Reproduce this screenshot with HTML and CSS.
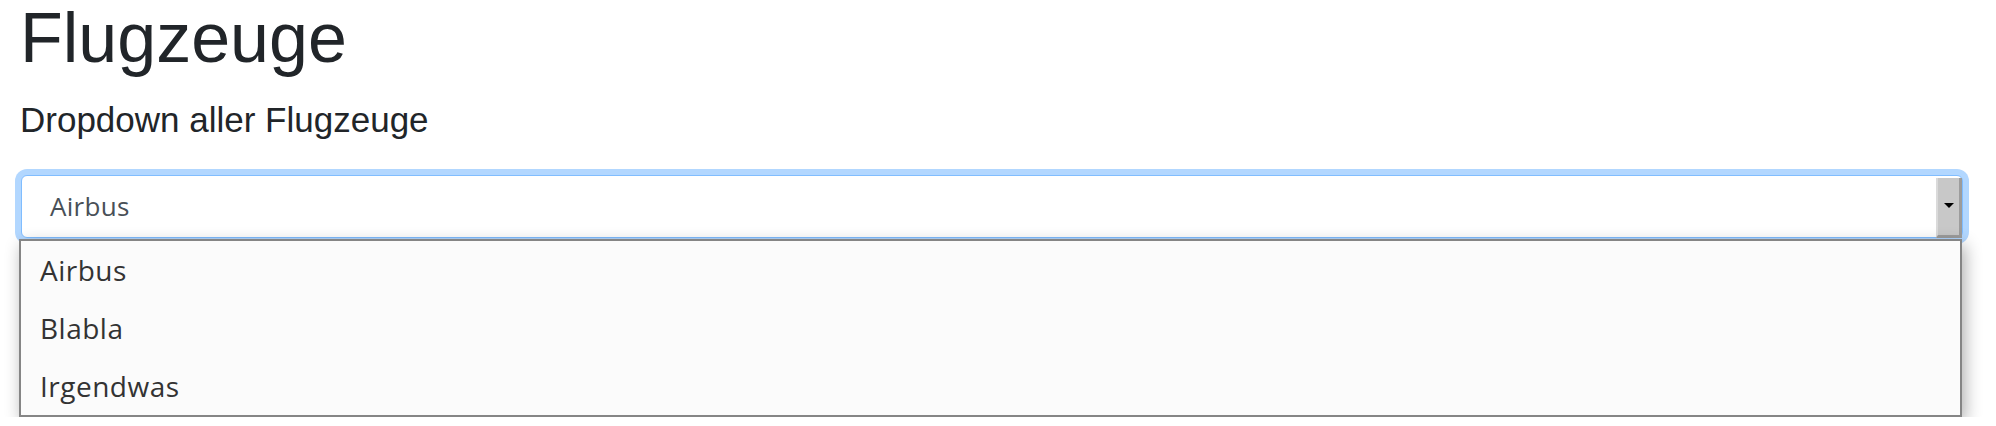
FILE: index.html
```
<!DOCTYPE html>
<html lang="de">
<head>
<meta charset="utf-8">
<title>Flugzeuge</title>
<link rel="stylesheet" href="styles.css">
</head>
<body>
<div class="page">
  <h1 class="title">Flugzeuge</h1>
  <p class="subtitle">Dropdown aller Flugzeuge</p>
  <div class="combo">
    <div class="select">
      <span class="value">Airbus</span>
      <span class="btn"><span class="arrow"></span></span>
    </div>
    <div class="list">
      <div class="option">Airbus</div>
      <div class="option">Blabla</div>
      <div class="option">Irgendwas</div>
    </div>
  </div>
</div>
</body>
</html>
```
FILE: styles.css
```
html, body {
  margin: 0;
  padding: 0;
  background: #ffffff;
}
.page {
  padding: 0 33px 0 20px;
  font-family: "Liberation Sans", Arial, sans-serif;
  color: #212529;
}
.title {
  margin: 0;
  font-size: 70px;
  line-height: 76px;
  font-weight: 400;
}
.subtitle {
  margin: 24px 0 0 0;
  font-size: 35px;
  line-height: 40px;
}
.combo {
  margin: 35px 0 0 1px;
  display: flex;
  flex-direction: column;
}
.select {
  position: relative;
  z-index: 2;
  height: 61px;
  border: 1px solid #80bdff;
  border-radius: 6px;
  box-shadow: 0 0 0 6px rgba(0, 123, 255, 0.3);
  background: #fff;
  display: flex;
  align-items: center;
  padding-left: 28px;
  font-family: "Open Sans", "Noto Sans", sans-serif;
  font-size: 26px;
  line-height: 61px;
  letter-spacing: 0.3px;
  color: #495057;
}
.btn {
  position: absolute;
  right: 0;
  top: 2px;
  bottom: -1px;
  width: 21px;
  background: #c8c8c8;
  border-left: 2px solid #dadada;
  border-right: 3px solid #9c9c9c;
  border-bottom: 3px solid #9c9c9c;
  display: flex;
  align-items: center;
  justify-content: center;
}
.arrow {
  width: 0;
  height: 0;
  border-left: 5px solid transparent;
  border-right: 5px solid transparent;
  border-top: 5px solid #000;
  margin-top: -2px;
}
.list {
  position: relative;
  z-index: 3;
  margin: 1px 1px 0 -2px;
  background: #fbfbfb;
  border: 2px solid #858585;
  box-shadow: 3px 6px 16px rgba(0, 0, 0, 0.32);
}
.option {
  height: 58px;
  line-height: 58px;
  padding-left: 19px;
  font-family: "Open Sans", "Noto Sans", sans-serif;
  font-size: 28px;
  letter-spacing: 0.5px;
  color: #333333;
}
```
